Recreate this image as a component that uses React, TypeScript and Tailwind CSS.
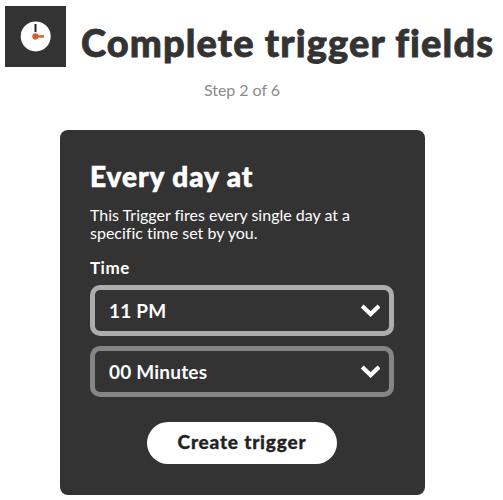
function ClockIcon() {
  return (
    <svg viewBox="0 0 61 61" className="mt-1.5 h-[61px] w-[61px] shrink-0 bg-[#333333]">
      <circle cx="30.7" cy="30.4" r="15" fill="#fff" />
      <path d="M30.5 18v8" stroke="#222" strokeWidth="2" />
      <path d="M30.5 30.4H39" stroke="#d6602c" strokeWidth="2.4" />
      <circle cx="30.4" cy="30.4" r="3.1" fill="#d6602c" />
    </svg>
  );
}

function Chevron() {
  return (
    <svg viewBox="0 0 20 13" className="h-[13px] w-5 shrink-0">
      <path d="M2.2 2 10.6 10 19 2" fill="none" stroke="#fff" strokeWidth="4.2" />
    </svg>
  );
}

function Field({ label, tone }: { label: string; tone: string }) {
  return (
    <button className={`flex h-[51px] w-[304px] items-center justify-between rounded-[10px] border-[5px] pr-[9px] pl-[14px] ${tone}`}>
      <span className="text-[19px] leading-6 font-bold tracking-[0.2px] whitespace-nowrap">{label}</span>
      <Chevron />
    </button>
  );
}

export default function App() {
  return (
    <main className="h-[500px] w-[503px] overflow-hidden bg-white font-['Lato',sans-serif] text-white [font-variant-ligatures:none]">
      <header className="flex pl-[5px]">
        <ClockIcon />
        <h1 className="mt-[19px] ml-[15px] text-[38px] leading-[46px] font-black tracking-[1.12px] whitespace-nowrap text-[#333333] [-webkit-text-stroke:0.8px_#333333]">
          Complete trigger fields
        </h1>
      </header>
      <p className="mt-[13px] ml-[204px] text-[16px] leading-5 tracking-[-0.05px] whitespace-nowrap text-[#8c8c8c]">Step 2 of 6</p>
      <section className="mt-[30px] ml-[60px] flex h-[365px] w-[365px] flex-col rounded-lg bg-[#333333] px-[30px]">
        <h2 className="mt-[29px] text-[28px] leading-[34px] font-black tracking-[0.95px] whitespace-nowrap [-webkit-text-stroke:0.6px_#fff]">Every day at</h2>
        <p className="mt-[13px] text-[16px] leading-[18px] whitespace-nowrap">
          This Trigger fires every single day at a
          <br />
          specific time set by you.
        </p>
        <p className="mt-[16px] text-[17px] leading-5 font-bold tracking-[0.5px]">Time</p>
        <div className="mt-[7px] flex flex-col gap-[10px]">
          <Field label="11 PM" tone="border-[#adadad]" />
          <Field label="00 Minutes" tone="border-[#858585]" />
        </div>
        <button className="mt-[25px] ml-[57px] h-[42px] w-[190px] rounded-full bg-white pb-0.5 text-[19px] leading-6 font-black tracking-[0.8px] whitespace-nowrap text-[#222222] [-webkit-text-stroke:0.3px_#222222]">
          Create trigger
        </button>
      </section>
    </main>
  );
}
